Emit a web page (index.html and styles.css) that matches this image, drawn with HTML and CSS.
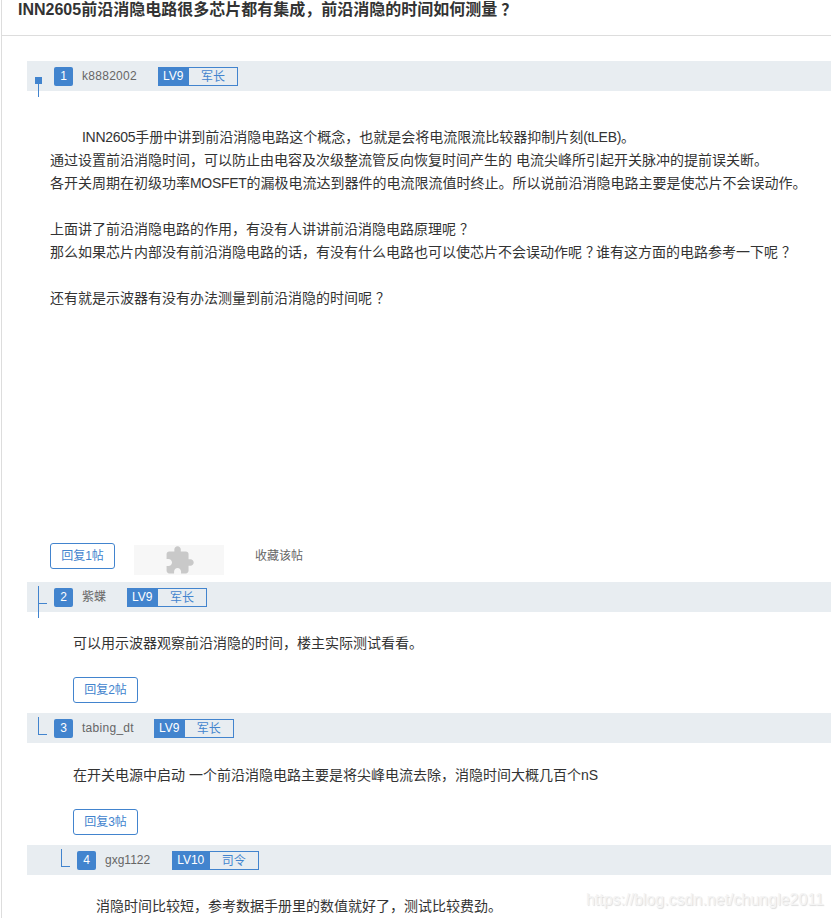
FILE: index.html
```html
<!DOCTYPE html>
<html lang="zh-CN">
  <head>
    <meta charset="UTF-8" />
    <meta name="viewport" content="width=device-width, initial-scale=1.0" />
    <link rel="stylesheet" href="styles.css">
    <title>INN2605前沿消隐电路</title>
  </head>
  <body>
    <div class="wrapper">
      <h1 class="title">INN2605前沿消隐电路很多芯片都有集成，前沿消隐的时间如何测量<span class="mark">？</span></h1>
      <div class="thread">
        <div class="post post_first">
          <div class="post__head">
            <span class="branch branch_root"></span>
            <span class="floor">1</span>
            <span class="name name_wide">k8882002</span>
            <span class="level"><b class="level__num">LV9</b><span class="level__rank">军长</span></span>
          </div>
          <div class="post__text">
            <p class="indent"><span class="latin">INN2605</span>手册中讲到前沿消隐电路这个概念，也就是会将电流限流比较器抑制片刻<span class="latin">(tLEB)</span>。</p>
            <p>通过设置前沿消隐时间，可以防止由电容及次级整流管反向恢复时间产生的 电流尖峰所引起开关脉冲的提前误关断。</p>
            <p>各开关周期在初级功率<span class="latin">MOSFET</span>的漏极电流达到器件的电流限流值时终止。所以说前沿消隐电路主要是使芯片不会误动作。</p>
            <br>
            <p>上面讲了前沿消隐电路的作用，有没有人讲讲前沿消隐电路原理呢<span class="mark">？</span></p>
            <p>那么如果芯片内部没有前沿消隐电路的话，有没有什么电路也可以使芯片不会误动作呢<span class="mark">？</span>谁有这方面的电路参考一下呢<span class="mark">？</span></p>
            <br>
            <p>还有就是示波器有没有办法测量到前沿消隐的时间呢<span class="mark">？</span></p>
          </div>
          <div class="post__actions">
            <button class="button">回复1帖</button>
            <div class="plugin">
              <svg class="plugin__icon" viewBox="0 0 24 24"><path d="M20.5 11H19V7c0-1.1-.9-2-2-2h-4V3.5C13 2.12 11.88 1 10.5 1S8 2.12 8 3.5V5H4c-1.1 0-2 .9-2 2v3.8h1.5c1.49 0 2.7 1.21 2.7 2.7s-1.21 2.7-2.7 2.7H2V20c0 1.1.9 2 2 2h3.8v-1.5c0-1.49 1.21-2.7 2.7-2.7s2.7 1.21 2.7 2.7V22H17c1.1 0 2-.9 2-2v-4h1.5c1.38 0 2.5-1.12 2.5-2.5S21.88 11 20.5 11z"/></svg>
            </div>
            <a class="favorite">收藏该帖</a>
          </div>
        </div>
        <div class="post">
          <div class="post__head">
            <span class="branch branch_middle"></span>
            <span class="floor">2</span>
            <span class="name">紫蝶</span>
            <span class="level"><b class="level__num">LV9</b><span class="level__rank">军长</span></span>
          </div>
          <div class="post__text">
            <p>可以用示波器观察前沿消隐的时间，楼主实际测试看看。</p>
          </div>
          <div class="post__actions">
            <button class="button">回复2帖</button>
          </div>
        </div>
        <div class="post post_third">
          <div class="post__head">
            <span class="branch"></span>
            <span class="floor">3</span>
            <span class="name">tabing_dt</span>
            <span class="level"><b class="level__num">LV9</b><span class="level__rank">军长</span></span>
          </div>
          <div class="post__text">
            <p>在开关电源中启动 一个前沿消隐电路主要是将尖峰电流去除，消隐时间大概几百个nS</p>
          </div>
          <div class="post__actions">
            <button class="button">回复3帖</button>
          </div>
        </div>
        <div class="post post_nested">
          <div class="post__head">
            <span class="branch"></span>
            <span class="floor">4</span>
            <span class="name">gxg1122</span>
            <span class="level"><b class="level__num">LV10</b><span class="level__rank">司令</span></span>
          </div>
          <div class="post__text">
            <p>消隐时间比较短，参考数据手册里的数值就好了，测试比较费劲。</p>
          </div>
        </div>
      </div>
    </div>
    <div class="watermark">https://blog.csdn.net/chungle2011</div>
  </body>
</html>
```
FILE: styles.css
```css
*,
*::after,
*::before {
  box-sizing: border-box;
  margin: 0;
  padding: 0;
}

body {
  height: 918px;
  overflow: hidden;
  position: relative;
  background: #fff;
  color: #333;
  font-family: "Liberation Sans", "Noto Sans CJK SC", sans-serif;
  font-size: 14px;
}

.wrapper {
  height: 918px;
  margin-left: 1px;
  border-left: 1px solid #ddd;
  overflow: hidden;
}

.title {
  height: 36px;
  padding-left: 16px;
  border-bottom: 1px solid #ddd;
  font-size: 16px;
  line-height: 19px;
  white-space: nowrap;
}

.thread {
  padding: 25px 0 0 25px;
}

.post {
  height: 131px;
}

.post_first {
  height: 521px;
}

.post_third {
  height: 132px;
}

.post__head {
  display: flex;
  align-items: center;
  position: relative;
  height: 30px;
  padding-left: 27px;
  background: #e8edf1;
  font-size: 12px;
}

.post_nested .post__head {
  padding-left: 50px;
}

/* tree lines in front of the floor number */
.branch {
  position: absolute;
  left: 11px;
  top: 4px;
  width: 9px;
  height: 18px;
  border-left: 1px solid #4284ce;
  border-bottom: 1px solid #4284ce;
}

.post_nested .branch {
  left: 34px;
}

.branch_middle {
  height: 32px;
  border-bottom: 0;
}

.branch_middle::after {
  content: "";
  position: absolute;
  left: 0;
  top: 17px;
  width: 8px;
  height: 1px;
  background: #4284ce;
}

.branch_root {
  top: 16px;
  height: 20px;
  border-bottom: 0;
}

.branch_root::after {
  content: "";
  position: absolute;
  left: -4px;
  top: 0;
  width: 7px;
  height: 7px;
  background: #4284ce;
}

.floor {
  width: 19px;
  height: 19px;
  border-radius: 2px;
  background: #4284ce;
  color: #fff;
  line-height: 19px;
  text-align: center;
}

.name {
  margin: 0 21px 0 9px;
  color: #666;
  line-height: 18px;
}

.name_wide {
  letter-spacing: 0.28px;
}

.post_third .name {
  margin-right: 20px;
  letter-spacing: 0.28px;
}

.post_nested .name {
  margin-right: 22px;
}

.level {
  display: flex;
  height: 19px;
  border: 1px solid #4284ce;
  color: #4284ce;
  line-height: 17px;
}

.level__num {
  min-width: 30px;
  padding: 0 6px 0 4px;
  background: #4284ce;
  color: #fff;
  font-weight: 400;
}

.level__rank {
  width: 48px;
  padding-right: 1px;
  line-height: 18px;
  text-align: center;
}

.post__text {
  padding: 20px 0 0 46px;
  line-height: 23px;
  white-space: nowrap;
}

.post_first .post__text {
  height: 452px;
  padding: 35px 0 0 23px;
}

.post_third .post__text {
  padding-top: 21px;
}

.post_nested .post__text {
  padding-left: 69px;
}

.indent {
  text-indent: 32px;
}

.latin {
  letter-spacing: -0.3px;
}

/* question mark in the middle of its cell */
.mark {
  margin: 0 -4px 0 4px;
}

.post__actions {
  display: flex;
  padding: 22px 0 0 46px;
}

.post_first .post__actions {
  padding: 0 0 0 23px;
}

.button {
  width: 65px;
  height: 26px;
  background: #fff;
  border: 1px solid #4284ce;
  border-radius: 3px;
  color: #4284ce;
  font-family: inherit;
  font-size: 12px;
  line-height: 24px;
  cursor: pointer;
}

.plugin {
  display: flex;
  align-items: center;
  justify-content: center;
  width: 90px;
  height: 30px;
  margin: 2px 31px 0 19px;
  background: #f7f7f7;
}

.plugin__icon {
  flex: none;
  width: 31px;
  height: 31px;
  fill: #c9c9c9;
}

.favorite {
  color: #666;
  font-size: 12px;
  line-height: 26px;
}

.watermark {
  position: absolute;
  right: 7px;
  bottom: 9px;
  color: #f4f4f4;
  font-size: 16px;
  line-height: 18px;
  text-shadow: 1px 1px 1px #ddd;
}
```
